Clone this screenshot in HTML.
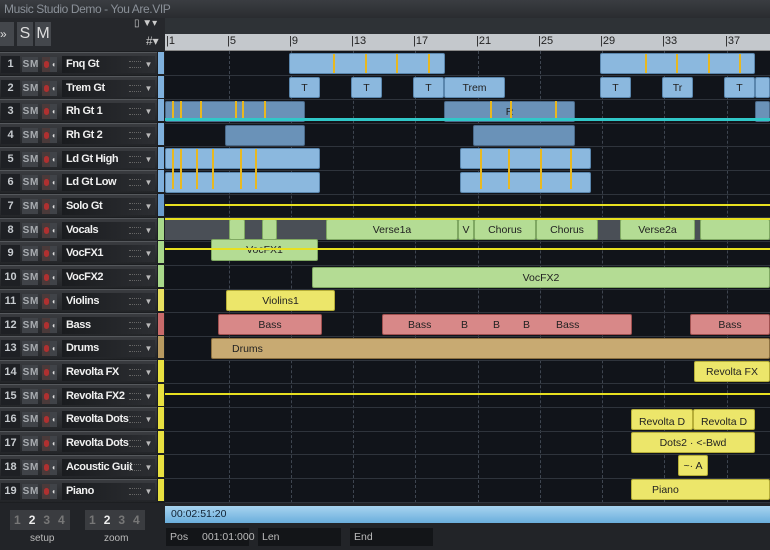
<!DOCTYPE html>
<html><head><meta charset="utf-8"><style>
*{margin:0;padding:0;box-sizing:border-box}
body{width:770px;height:550px;overflow:hidden;background:#0f1218;font-family:"Liberation Sans",sans-serif;position:relative}
.a{position:absolute}
.title{left:0;top:0;width:770px;height:18px;background:linear-gradient(#3a3d42,#2a2c30);color:#8a9098;font-size:12px;padding:2px 4px;letter-spacing:-0.4px}
.hdr{left:0;width:157px;height:23px;background:linear-gradient(#3a3c40,#232528);border-top:1px solid #55585c}
.num{left:1px;top:3px;width:19px;height:17px;background:#1e2024;color:#c8ccd0;font-size:11px;text-align:center;line-height:17px;font-weight:bold}
.sm{top:4px;height:15px;width:8px;background:#404348;color:#a8acb0;font-size:10px;font-weight:bold;line-height:15px;text-align:center}
.rec{left:42px;top:4px;width:8px;height:15px;background:#4a3a3a}
.rec:after{content:"";position:absolute;left:2px;top:4px;width:5px;height:7px;border-radius:3px;background:#b03030}
.mon{left:50px;top:4px;width:7px;height:15px;background:#404348;color:#ddd;font-size:8px;line-height:15px;text-align:center}
.nm{left:62px;top:3px;width:93px;height:17px;background:linear-gradient(90deg,#1a1c1f,#2c2e32);color:#f0f0f0;font-size:11px;font-weight:bold;line-height:17px;padding-left:4px;white-space:nowrap;letter-spacing:-0.4px;overflow:hidden}
.nm i{position:absolute;right:3px;top:0;font-style:normal;font-size:8px;color:#bbb}
.nm b{position:absolute;right:14px;top:5px;width:12px;height:7px;border-top:1px dotted #666;border-bottom:1px dotted #666}
.st{left:158px;width:6px;height:22px}
.row{left:165px;width:605px;height:1px;background:#2f343c}
.g{top:33px;width:0;height:470px;border-left:1px dashed #3e4550}
.c{border-radius:2px;font-size:10.5px;color:#222;line-height:20px;text-align:center;white-space:nowrap;overflow:hidden;height:21px}
.bl{background:#8bb8de;border:1px solid #5a86ad}
.bd{background:#6a92b8;border:1px solid #4a6a8a}
.gr{background:#b4dc94;border:1px solid #7fa862}
.ye{background:#ece66a;border:1px solid #b6ae38}
.pk{background:#d88888;border:1px solid #a05050}
.tn{background:#c8aa72;border:1px solid #8c7040}
.yl{background:#e8e020;height:2px}
.or{background:#e8b820;width:2px;height:19px}
.f{top:528px;width:83px;height:18px;background:#131518;color:#bbb;font-size:10.5px;line-height:18px;padding-left:4px;white-space:nowrap}
</style></head><body>
<div class="a title">Music Studio Demo - You Are.VIP</div>
<div class="a" style="left:0;top:18px;width:165px;height:34px;background:#26282c"></div>
<div class="a" style="left:0;top:22px;width:14px;height:24px;background:#44474c;color:#ddd;font-size:12px;line-height:24px">»</div>
<div class="a" style="left:17px;top:22px;width:16px;height:24px;background:#44474c;color:#ddd;font-size:16px;line-height:24px;text-align:center">S</div>
<div class="a" style="left:35px;top:22px;width:16px;height:24px;background:#44474c;color:#ddd;font-size:16px;line-height:24px;text-align:center">M</div>
<div class="a" style="left:134px;top:18px;width:30px;height:14px;color:#ccc;font-size:10px">▯ ▼▾</div>
<div class="a" style="left:146px;top:34px;width:18px;height:14px;color:#ccc;font-size:12px">#▾</div>
<div class="a" style="left:165px;top:18px;width:605px;height:16px;background:#2e3236"></div>
<div class="a" style="left:165px;top:34px;width:605px;height:17px;background:#c4c8cc;border-bottom:1px solid #888"></div>
<div class="a" style="left:165px;top:34px;width:605px;height:17px;font-size:11px;color:#222">
<span class="a" style="left:1px;top:1px">|1</span><span class="a" style="left:62px;top:1px">|5</span><span class="a" style="left:124px;top:1px">|9</span><span class="a" style="left:186px;top:1px">|13</span><span class="a" style="left:248px;top:1px">|17</span><span class="a" style="left:311px;top:1px">|21</span><span class="a" style="left:373px;top:1px">|25</span><span class="a" style="left:435px;top:1px">|29</span><span class="a" style="left:497px;top:1px">|33</span><span class="a" style="left:560px;top:1px">|37</span></div>
<div class="a" style="left:165px;top:51px;width:605px;height:452px;background:#11141a"></div>
<div class="a g" style="left:229px;top:51px;height:452px"></div><div class="a g" style="left:291px;top:51px;height:452px"></div><div class="a g" style="left:353px;top:51px;height:452px"></div><div class="a g" style="left:415px;top:51px;height:452px"></div><div class="a g" style="left:478px;top:51px;height:452px"></div><div class="a g" style="left:540px;top:51px;height:452px"></div><div class="a g" style="left:602px;top:51px;height:452px"></div><div class="a g" style="left:664px;top:51px;height:452px"></div><div class="a g" style="left:727px;top:51px;height:452px"></div>
<div class="a row" style="top:75px"></div><div class="a row" style="top:99px"></div><div class="a row" style="top:123px"></div><div class="a row" style="top:146px"></div><div class="a row" style="top:170px"></div><div class="a row" style="top:194px"></div><div class="a row" style="top:217px"></div><div class="a row" style="top:241px"></div><div class="a row" style="top:265px"></div><div class="a row" style="top:289px"></div><div class="a row" style="top:312px"></div><div class="a row" style="top:336px"></div><div class="a row" style="top:360px"></div><div class="a row" style="top:383px"></div><div class="a row" style="top:407px"></div><div class="a row" style="top:431px"></div><div class="a row" style="top:454px"></div><div class="a row" style="top:478px"></div><div class="a row" style="top:502px"></div>

<div class="a c bl" style="left:289px;top:53px;width:156px"></div>
<div class="a c bl" style="left:600px;top:53px;width:155px"></div>
<div class="a or" style="left:333px;top:54px"></div><div class="a or" style="left:365px;top:54px"></div><div class="a or" style="left:396px;top:54px"></div><div class="a or" style="left:428px;top:54px"></div><div class="a or" style="left:645px;top:54px"></div><div class="a or" style="left:676px;top:54px"></div><div class="a or" style="left:708px;top:54px"></div><div class="a or" style="left:739px;top:54px"></div>
<div class="a c bl" style="left:289px;top:77px;width:31px">T</div><div class="a c bl" style="left:351px;top:77px;width:31px">T</div><div class="a c bl" style="left:413px;top:77px;width:31px">T</div><div class="a c bl" style="left:444px;top:77px;width:61px">Trem</div>
<div class="a c bl" style="left:600px;top:77px;width:31px">T</div><div class="a c bl" style="left:662px;top:77px;width:31px">Tr</div><div class="a c bl" style="left:724px;top:77px;width:31px">T</div><div class="a c bl" style="left:755px;top:77px;width:15px"></div>
<div class="a c bd" style="left:165px;top:101px;width:140px"></div><div class="a c bd" style="left:444px;top:101px;width:131px">R</div><div class="a c bd" style="left:755px;top:101px;width:15px"></div>
<div class="a or" style="left:172px;top:101px"></div><div class="a or" style="left:180px;top:101px"></div><div class="a or" style="left:200px;top:101px"></div><div class="a or" style="left:235px;top:101px"></div><div class="a or" style="left:242px;top:101px"></div><div class="a or" style="left:264px;top:101px"></div><div class="a or" style="left:490px;top:101px"></div><div class="a or" style="left:510px;top:101px"></div><div class="a or" style="left:555px;top:101px"></div>
<div class="a" style="left:165px;top:118px;width:605px;height:3px;background:#30c8c8"></div>
<div class="a c bd" style="left:225px;top:125px;width:80px"></div><div class="a c bd" style="left:473px;top:125px;width:102px"></div>
<div class="a c bl" style="left:165px;top:148px;width:155px"></div><div class="a c bl" style="left:460px;top:148px;width:131px"></div>
<div class="a c bl" style="left:165px;top:172px;width:155px"></div><div class="a c bl" style="left:460px;top:172px;width:131px"></div>
<div class="a or" style="left:172px;top:149px;height:40px"></div><div class="a or" style="left:180px;top:149px;height:40px"></div><div class="a or" style="left:196px;top:149px;height:40px"></div><div class="a or" style="left:212px;top:149px;height:40px"></div><div class="a or" style="left:240px;top:149px;height:40px"></div><div class="a or" style="left:255px;top:149px;height:40px"></div><div class="a or" style="left:480px;top:149px;height:40px"></div><div class="a or" style="left:508px;top:149px;height:40px"></div><div class="a or" style="left:540px;top:149px;height:40px"></div><div class="a or" style="left:570px;top:149px;height:40px"></div>
<div class="a yl" style="left:165px;top:204px;width:605px"></div>
<div class="a" style="left:165px;top:219px;width:605px;height:21px;background:#4a4f56"></div>
<div class="a c gr" style="left:229px;top:219px;width:16px"></div><div class="a c gr" style="left:262px;top:219px;width:15px"></div>
<div class="a c gr" style="left:326px;top:219px;width:132px">Verse1a</div><div class="a c gr" style="left:458px;top:219px;width:16px">V</div><div class="a c gr" style="left:474px;top:219px;width:62px">Chorus</div><div class="a c gr" style="left:536px;top:219px;width:62px">Chorus</div><div class="a c gr" style="left:620px;top:219px;width:75px">Verse2a</div><div class="a c gr" style="left:700px;top:219px;width:70px"></div>
<div class="a yl" style="left:165px;top:218px;width:605px"></div>
<div class="a c gr" style="left:211px;top:239px;width:107px;height:22px">VocFX1</div>
<div class="a yl" style="left:165px;top:248px;width:605px"></div>
<div class="a c gr" style="left:312px;top:267px;width:458px">VocFX2</div>
<div class="a c ye" style="left:226px;top:290px;width:109px">Violins1</div>
<div class="a c pk" style="left:218px;top:314px;width:104px">Bass</div><div class="a c pk" style="left:382px;top:314px;width:250px"><span class="a" style="left:25px">Bass</span><span class="a" style="left:78px">B</span><span class="a" style="left:110px">B</span><span class="a" style="left:140px">B</span><span class="a" style="left:173px">Bass</span></div><div class="a c pk" style="left:690px;top:314px;width:80px">Bass</div>
<div class="a c tn" style="left:211px;top:338px;width:559px;text-align:left;padding-left:20px">Drums</div>
<div class="a c ye" style="left:694px;top:361px;width:76px">Revolta FX</div>
<div class="a yl" style="left:165px;top:393px;width:605px"></div>
<div class="a c ye" style="left:631px;top:409px;width:62px;padding-top:2px">Revolta D</div><div class="a c ye" style="left:693px;top:409px;width:62px;padding-top:2px">Revolta D</div>
<div class="a c ye" style="left:631px;top:432px;width:124px">Dots2 · &lt;-Bwd</div>
<div class="a c ye" style="left:678px;top:455px;width:30px">~· A</div>
<div class="a c ye" style="left:631px;top:479px;width:139px;text-align:left;padding-left:20px">Piano</div>

<div class="a" style="left:0;top:51px;width:165px;height:452px;background:#1c1e21"></div>
<div class="a hdr" style="top:52px"><div class="a num">1</div><div class="a sm" style="left:22px">S</div><div class="a sm" style="left:30px">M</div><div class="a rec"></div><div class="a mon">◖</div><div class="a nm">Fnq Gt<b></b><i>▼</i></div></div>
<div class="a hdr" style="top:76px"><div class="a num">2</div><div class="a sm" style="left:22px">S</div><div class="a sm" style="left:30px">M</div><div class="a rec"></div><div class="a mon">◖</div><div class="a nm">Trem Gt<b></b><i>▼</i></div></div>
<div class="a hdr" style="top:99px"><div class="a num">3</div><div class="a sm" style="left:22px">S</div><div class="a sm" style="left:30px">M</div><div class="a rec"></div><div class="a mon">◖</div><div class="a nm">Rh Gt 1<b></b><i>▼</i></div></div>
<div class="a hdr" style="top:123px"><div class="a num">4</div><div class="a sm" style="left:22px">S</div><div class="a sm" style="left:30px">M</div><div class="a rec"></div><div class="a mon">◖</div><div class="a nm">Rh Gt 2<b></b><i>▼</i></div></div>
<div class="a hdr" style="top:147px"><div class="a num">5</div><div class="a sm" style="left:22px">S</div><div class="a sm" style="left:30px">M</div><div class="a rec"></div><div class="a mon">◖</div><div class="a nm">Ld Gt High<b></b><i>▼</i></div></div>
<div class="a hdr" style="top:170px"><div class="a num">6</div><div class="a sm" style="left:22px">S</div><div class="a sm" style="left:30px">M</div><div class="a rec"></div><div class="a mon">◖</div><div class="a nm">Ld Gt Low<b></b><i>▼</i></div></div>
<div class="a hdr" style="top:194px"><div class="a num">7</div><div class="a sm" style="left:22px">S</div><div class="a sm" style="left:30px">M</div><div class="a rec"></div><div class="a mon">◖</div><div class="a nm">Solo Gt<b></b><i>▼</i></div></div>
<div class="a hdr" style="top:218px"><div class="a num">8</div><div class="a sm" style="left:22px">S</div><div class="a sm" style="left:30px">M</div><div class="a rec"></div><div class="a mon">◖</div><div class="a nm">Vocals<b></b><i>▼</i></div></div>
<div class="a hdr" style="top:241px"><div class="a num">9</div><div class="a sm" style="left:22px">S</div><div class="a sm" style="left:30px">M</div><div class="a rec"></div><div class="a mon">◖</div><div class="a nm">VocFX1<b></b><i>▼</i></div></div>
<div class="a hdr" style="top:265px"><div class="a num">10</div><div class="a sm" style="left:22px">S</div><div class="a sm" style="left:30px">M</div><div class="a rec"></div><div class="a mon">◖</div><div class="a nm">VocFX2<b></b><i>▼</i></div></div>
<div class="a hdr" style="top:289px"><div class="a num">11</div><div class="a sm" style="left:22px">S</div><div class="a sm" style="left:30px">M</div><div class="a rec"></div><div class="a mon">◖</div><div class="a nm">Violins<b></b><i>▼</i></div></div>
<div class="a hdr" style="top:313px"><div class="a num">12</div><div class="a sm" style="left:22px">S</div><div class="a sm" style="left:30px">M</div><div class="a rec"></div><div class="a mon">◖</div><div class="a nm">Bass<b></b><i>▼</i></div></div>
<div class="a hdr" style="top:336px"><div class="a num">13</div><div class="a sm" style="left:22px">S</div><div class="a sm" style="left:30px">M</div><div class="a rec"></div><div class="a mon">◖</div><div class="a nm">Drums<b></b><i>▼</i></div></div>
<div class="a hdr" style="top:360px"><div class="a num">14</div><div class="a sm" style="left:22px">S</div><div class="a sm" style="left:30px">M</div><div class="a rec"></div><div class="a mon">◖</div><div class="a nm">Revolta FX<b></b><i>▼</i></div></div>
<div class="a hdr" style="top:384px"><div class="a num">15</div><div class="a sm" style="left:22px">S</div><div class="a sm" style="left:30px">M</div><div class="a rec"></div><div class="a mon">◖</div><div class="a nm">Revolta FX2<b></b><i>▼</i></div></div>
<div class="a hdr" style="top:407px"><div class="a num">16</div><div class="a sm" style="left:22px">S</div><div class="a sm" style="left:30px">M</div><div class="a rec"></div><div class="a mon">◖</div><div class="a nm">Revolta Dots<b></b><i>▼</i></div></div>
<div class="a hdr" style="top:431px"><div class="a num">17</div><div class="a sm" style="left:22px">S</div><div class="a sm" style="left:30px">M</div><div class="a rec"></div><div class="a mon">◖</div><div class="a nm">Revolta Dots<b></b><i>▼</i></div></div>
<div class="a hdr" style="top:455px"><div class="a num">18</div><div class="a sm" style="left:22px">S</div><div class="a sm" style="left:30px">M</div><div class="a rec"></div><div class="a mon">◖</div><div class="a nm">Acoustic Guit<b></b><i>▼</i></div></div>
<div class="a hdr" style="top:479px"><div class="a num">19</div><div class="a sm" style="left:22px">S</div><div class="a sm" style="left:30px">M</div><div class="a rec"></div><div class="a mon">◖</div><div class="a nm">Piano<b></b><i>▼</i></div></div>
<div class="a st" style="top:52px;background:#7fb0dc"></div><div class="a st" style="top:76px;background:#7fb0dc"></div><div class="a st" style="top:99px;background:#7fb0dc"></div><div class="a st" style="top:123px;background:#7fb0dc"></div><div class="a st" style="top:147px;background:#7fb0dc"></div><div class="a st" style="top:170px;background:#7fb0dc"></div><div class="a st" style="top:194px;background:#6a9ccc"></div><div class="a st" style="top:218px;background:#a8d88a"></div><div class="a st" style="top:241px;background:#a8d88a"></div><div class="a st" style="top:265px;background:#a8d88a"></div><div class="a st" style="top:289px;background:#e8e060"></div><div class="a st" style="top:313px;background:#c86a6a"></div><div class="a st" style="top:336px;background:#b89a60"></div><div class="a st" style="top:360px;background:#e8e040"></div><div class="a st" style="top:384px;background:#e8e040"></div><div class="a st" style="top:407px;background:#e8e040"></div><div class="a st" style="top:431px;background:#e8e040"></div><div class="a st" style="top:455px;background:#e8e040"></div><div class="a st" style="top:479px;background:#e8e040"></div>

<div class="a" style="left:0;top:503px;width:770px;height:47px;background:#222428"></div>
<div class="a" style="left:10px;top:510px;width:60px;height:20px;background:#3a3c40;color:#777;font-size:12px;line-height:20px;font-weight:bold;letter-spacing:8px;padding-left:4px">1<span style="color:#eee">2</span>34</div>
<div class="a" style="left:85px;top:510px;width:60px;height:20px;background:#3a3c40;color:#777;font-size:12px;line-height:20px;font-weight:bold;letter-spacing:8px;padding-left:4px">1<span style="color:#eee">2</span>34</div>
<div class="a" style="left:30px;top:533px;color:#bbb;font-size:10px">setup</div>
<div class="a" style="left:104px;top:533px;color:#bbb;font-size:10px">zoom</div>
<div class="a" style="left:165px;top:506px;width:605px;height:17px;background:linear-gradient(#a8d4f0,#6aaedc);color:#123;font-size:10.5px;line-height:17px;padding-left:6px">00:02:51:20</div>
<div class="a f" style="left:166px">Pos<span class="a" style="left:36px">001:01:000</span></div>
<div class="a f" style="left:258px">Len</div>
<div class="a f" style="left:350px">End</div>
</body></html>
